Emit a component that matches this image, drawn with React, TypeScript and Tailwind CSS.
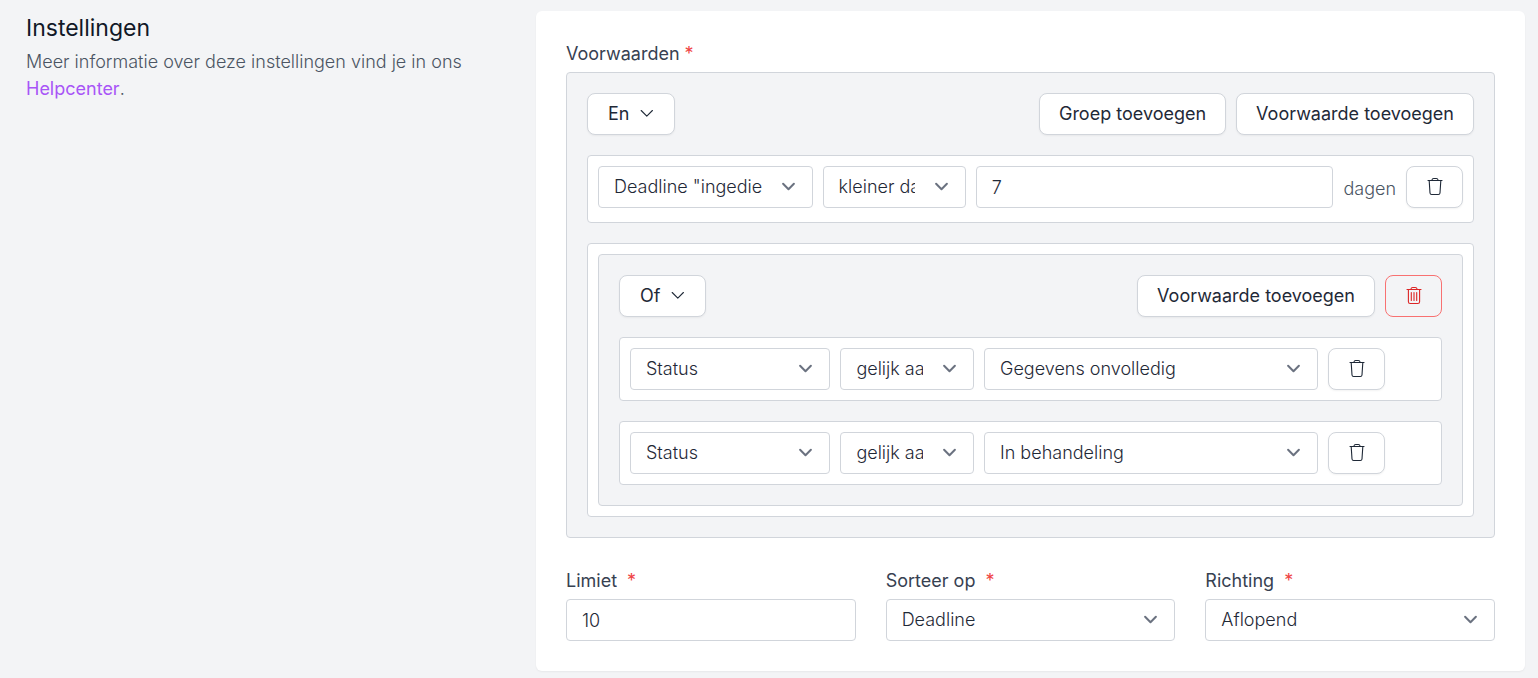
import React, { useId } from 'react';
import clsx from 'clsx';

const field =
  'h-[42px] w-full rounded border border-[#d1d5db] bg-white pl-[15px] text-lg font-light text-[#1f2937] outline-none focus:border-[#a855f7]';

const buttonBase = 'flex h-[42px] shrink-0 items-center justify-center rounded-lg border text-lg';
const buttonWhite = 'border-[#d1d5db] bg-white text-[#1f2937] shadow-xs hover:bg-gray-50';

const TrashIcon: React.FC = () => (
  <svg className="mb-0.5 h-5 w-5" viewBox="0 0 20 20" fill="none" stroke="currentColor" strokeWidth="1.1" strokeLinecap="round" strokeLinejoin="round" aria-hidden="true">
    <path d="M3 4.500h14" />
    <path d="M6.800 4.300c.3-1.200 1-1.800 1.900-1.800h2.600c.9 0 1.600.6 1.900 1.800" />
    <path d="M4.200 4.700l.8 12.300c.1 1 .7 1.500 1.600 1.500h6.800c.9 0 1.500-.5 1.600-1.500l.8-12.300" />
  </svg>
);

const TrashLinesIcon: React.FC = () => (
  <svg className="mb-0.5 h-5 w-5" viewBox="0 0 20 20" fill="none" stroke="currentColor" strokeWidth="1.1" strokeLinecap="round" strokeLinejoin="round" aria-hidden="true">
    <path d="M3 4.500h14" />
    <path d="M6.800 4.300c.3-1.200 1-1.800 1.900-1.800h2.600c.9 0 1.600.6 1.900 1.800" />
    <path d="M4.400 4.700v12c0 1.100.7 1.800 1.800 1.800h7.600c1.100 0 1.800-.7 1.800-1.800v-12" />
    <path d="M7.300 7.500v8M10 7.500v8M12.700 7.500v8" />
  </svg>
);

type SelectProps = {
  id?: string;
  label?: string;
  options: string[];
};

const Select: React.FC<SelectProps> = ({ id, label, options }) => (
  <div className="relative min-w-0">
    <select id={id} aria-label={label} className={clsx(field, 'appearance-none pr-[50px]')}>
      {options.map((option) => (
        <option key={option}>{option}</option>
      ))}
    </select>
    <svg
      className="pointer-events-none absolute top-[7px] right-[11px] h-[27px] w-[27px] text-[#6b7280]"
      viewBox="0 0 20 20"
      fill="none"
      stroke="currentColor"
      strokeWidth="1.5"
      strokeLinecap="round"
      strokeLinejoin="round"
      aria-hidden="true"
    >
      <path d="M6 8l4 4 4-4" />
    </svg>
  </div>
);

const OperatorButton: React.FC<{ children: string }> = ({ children }) => (
  <button type="button" className={clsx(buttonBase, buttonWhite, 'gap-[11px] px-5')}>
    {children}
    <svg className="h-3.5 w-3.5" viewBox="0 0 14 14" fill="none" stroke="currentColor" strokeWidth="1.1" strokeLinecap="round" strokeLinejoin="round" aria-hidden="true">
      <path d="M1.200 3.500l5.600 5.700 5.600-5.700" />
    </svg>
  </button>
);

const TextButton: React.FC<{ children: string }> = ({ children }) => (
  <button type="button" className={clsx(buttonBase, buttonWhite, 'px-[19px]')}>
    {children}
  </button>
);

const DeleteButton: React.FC = () => (
  <button type="button" aria-label="Verwijderen" className={clsx(buttonBase, buttonWhite, 'w-[57px]')}>
    <TrashIcon />
  </button>
);

const StatusCondition: React.FC<{ value: string }> = ({ value }) => (
  <div className="flex gap-2.5 rounded border border-[#d1d5db] bg-white py-2.5 pr-14 pl-2.5">
    <div className="grid min-w-0 flex-1 grid-cols-[3fr_2fr_5fr] gap-2.5">
      <Select label="Veld" options={['Status', 'Deadline']} />
      <Select label="Vergelijking" options={['gelijk aan', 'ongelijk aan']} />
      <Select label="Waarde" options={[value]} />
    </div>
    <DeleteButton />
  </div>
);

type FieldLabelProps = {
  htmlFor?: string;
  children: string;
};

const FieldLabel: React.FC<FieldLabelProps> = ({ htmlFor, children }) => (
  <label htmlFor={htmlFor} className="mb-[5px] flex gap-2.5 text-lg leading-[26px] text-[#374151]">
    {children}
    <span className="text-[#ef4444]">*</span>
  </label>
);

export default function App() {
  const limitId = useId();
  const sortId = useId();
  const directionId = useId();

  return (
    <main className="min-h-screen bg-[#f3f4f6] font-['Inter',sans-serif]">
      <div className="grid grid-cols-3 gap-[31px] pt-[11px] pr-[13px] pb-[7px] pl-[26px]">
        {/* Section intro */}
        <div>
          <h3 className="text-[23px] leading-[34px] text-[#111827]">Instellingen</h3>
          <p className="mt-[3px] text-lg leading-[27px] font-light text-[#4b5563]">
            Meer informatie over deze instellingen vind je in ons{' '}
            <a href="#helpcenter" className="font-normal text-[#a855f7]">
              Helpcenter
            </a>
            .
          </p>
        </div>

        {/* Settings card */}
        <form className="col-span-2 rounded-md bg-white p-[30px] shadow-xs">
          <fieldset className="min-w-0">
            <legend className="mb-[5px] flex gap-[5px] text-lg leading-[26px] text-[#374151]">
              Voorwaarden
              <span className="text-[#ef4444]">*</span>
            </legend>

            <div className="flex flex-col gap-5 rounded border border-[#d1d5db] bg-[#f3f4f6] p-5">
              <div className="flex items-center justify-between">
                <OperatorButton>En</OperatorButton>
                <div className="flex gap-2.5">
                  <TextButton>Groep toevoegen</TextButton>
                  <TextButton>Voorwaarde toevoegen</TextButton>
                </div>
              </div>

              <div className="flex gap-2.5 rounded border border-[#d1d5db] bg-white px-2.5 pt-2.5 pb-3.5">
                <div className="grid min-w-0 flex-1 grid-cols-[3fr_2fr_5fr] gap-2.5">
                  <Select label="Veld" options={['Deadline "ingediend"', 'Status']} />
                  <Select label="Vergelijking" options={['kleiner dan', 'groter dan']} />
                  <input aria-label="Aantal dagen" type="text" defaultValue="7" className={field} />
                </div>
                <span className="pt-[9px] text-lg font-light text-[#4b5563]">dagen</span>
                <DeleteButton />
              </div>

              {/* Nested group */}
              <div className="rounded border border-[#d1d5db] bg-white p-2.5">
                <div className="flex flex-col gap-5 rounded border border-[#d1d5db] bg-[#f3f4f6] p-5">
                  <div className="flex items-center justify-between">
                    <OperatorButton>Of</OperatorButton>
                    <div className="flex gap-2.5">
                      <TextButton>Voorwaarde toevoegen</TextButton>
                      <button
                        type="button"
                        aria-label="Groep verwijderen"
                        className={clsx(buttonBase, 'w-[57px] border-[#f87171] text-[#dc2626] hover:bg-red-50')}
                      >
                        <TrashLinesIcon />
                      </button>
                    </div>
                  </div>
                  <StatusCondition value="Gegevens onvolledig" />
                  <StatusCondition value="In behandeling" />
                </div>
              </div>
            </div>
          </fieldset>

          <div className="mt-[30px] grid grid-cols-3 gap-[30px]">
            <div>
              <FieldLabel htmlFor={limitId}>Limiet</FieldLabel>
              <input id={limitId} type="text" defaultValue="10" className={field} />
            </div>
            <div>
              <FieldLabel htmlFor={sortId}>Sorteer op</FieldLabel>
              <Select id={sortId} options={['Deadline', 'Status']} />
            </div>
            <div>
              <FieldLabel htmlFor={directionId}>Richting</FieldLabel>
              <Select id={directionId} options={['Aflopend', 'Oplopend']} />
            </div>
          </div>
        </form>
      </div>
    </main>
  );
}
